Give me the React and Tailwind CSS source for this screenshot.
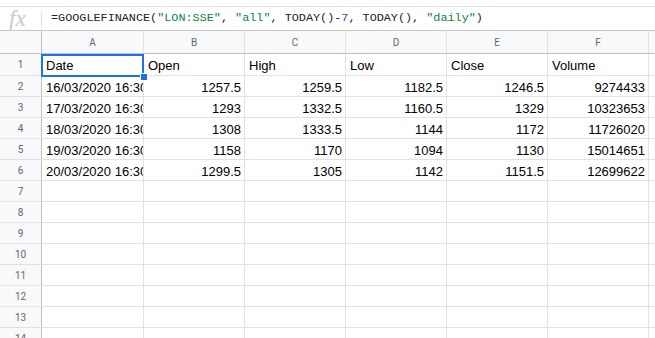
import React from 'react';

const cols = ['A', 'B', 'C', 'D', 'E', 'F'];
const widths = ['w-[102px]', 'w-[101px]', 'w-[101px]', 'w-[101px]', 'w-[101px]', 'w-[101px]'];

const rows = [
    ['Date', 'Open', 'High', 'Low', 'Close', 'Volume'],
    ['16/03/2020 16:30:00', '1257.5', '1259.5', '1182.5', '1246.5', '9274433'],
    ['17/03/2020 16:30:00', '1293', '1332.5', '1160.5', '1329', '10323653'],
    ['18/03/2020 16:30:00', '1308', '1333.5', '1144', '1172', '11726020'],
    ['19/03/2020 16:30:00', '1158', '1170', '1094', '1130', '15014651'],
    ['20/03/2020 16:30:00', '1299.5', '1305', '1142', '1151.5', '12699622'],
];

const TOTAL_ROWS = 14;

const FormulaBar = () => (
    <div className="mt-[6px] h-[25px] flex items-center border-t border-b border-[#e1e1e1] border-b-[#c7c7c7]">
        <span className="w-[42px] pl-[9px] text-[23px] italic text-[#c8c8c8] font-['Liberation_Serif',serif] leading-none">
            fx
        </span>
        <span className="h-[14px] w-px bg-[#dadce0] -ml-[1px]" />
        <span className="pl-[9px] text-[11.8px] text-[#202124] font-['Liberation_Mono',monospace] whitespace-pre">
            =GOOGLEFINANCE(<span className="text-[#0b8043]">"LON:SSE"</span>, <span className="text-[#0b8043]">"all"</span>, TODAY()-<span className="text-[#1155cc]">7</span>, TODAY(), <span className="text-[#0b8043]">"daily"</span>)
        </span>
    </div>
);

const App = () => {
    const bodyRows = Array.from({ length: TOTAL_ROWS }, (_, i) => rows[i] || null);

    return (
        <div className="w-[655px] h-[338px] overflow-hidden bg-white font-['Liberation_Sans',Arial,sans-serif]">
            <FormulaBar />

            {/* column headers */}
            <div className="flex h-[23px] bg-[#f8f9fa] border-b border-[#c0c0c0]">
                <div className="w-[42px] shrink-0 border-r border-[#c0c0c0]" />
                {cols.map((c, i) => (
                    <div
                        key={c}
                        className={`${widths[i]} shrink-0 border-r border-[#e2e2e2] flex items-center justify-center text-[10px] text-[#666] font-['Roboto',sans-serif]`}
                    >
                        {c}
                    </div>
                ))}
                <div className="flex-1" />
            </div>

            {/* body */}
            <div className="relative">
                {bodyRows.map((r, ri) => (
                    <div key={ri} className={`flex ${ri === 0 ? 'h-[22px]' : 'h-[21px]'} border-b border-[#e2e2e2]`}>
                        <div className="w-[42px] shrink-0 bg-[#f8f9fa] border-r border-[#c0c0c0] flex items-center justify-center text-[10px] text-[#666] font-['Roboto',sans-serif]">
                            {ri + 1}
                        </div>
                        {cols.map((c, ci) => {
                            const v = r ? r[ci] : '';
                            const numeric = ri > 0 && ci > 0;
                            return (
                                <div
                                    key={c}
                                    className={`${widths[ci]} shrink-0 border-r border-[#e2e2e2] overflow-hidden whitespace-nowrap flex items-end ${ri === 0 ? 'pb-[1px]' : 'pb-0'} text-[13px] text-black leading-[16px] ${numeric ? 'justify-end pr-[3px]' : 'pl-[4px]'}`}
                                >
                                    {v}
                                </div>
                            );
                        })}
                        <div className="flex-1" />
                    </div>
                ))}

                {/* active cell A1 */}
                <div className="absolute left-[41px] top-0 w-[103px] h-[23px] border-2 border-[#1a73e8] pointer-events-none" />
                <div className="absolute left-[140px] top-[19px] w-[6px] h-[6px] bg-[#1a73e8] border border-white box-content pointer-events-none" />
            </div>
        </div>
    );
};

export default App;
